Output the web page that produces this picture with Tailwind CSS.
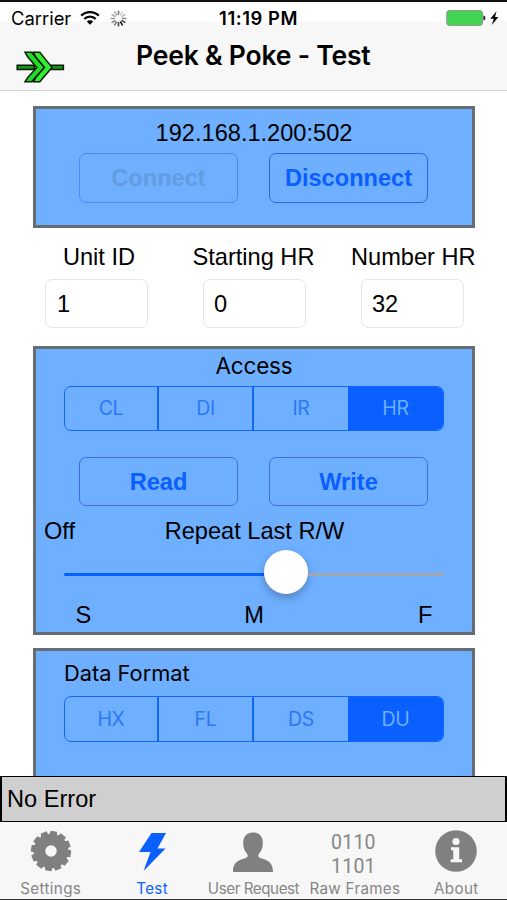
<!DOCTYPE html>
<html lang="en">
<head>
<meta charset="utf-8">
<title>Peek &amp; Poke - Test</title>
<script src="https://cdn.jsdelivr.net/npm/@tailwindcss/browser@4"></script>
</head>
<body class="w-[507px] h-[900px] overflow-hidden bg-white text-black font-['Liberation_Sans',Arial,sans-serif] text-[23.6px] leading-[28px]">
<div class="flex flex-col h-[900px] border-t-2 border-t-[#111] border-b border-b-[#333]">
  <header class="h-[89px] shrink-0 bg-linear-to-b from-white from-[18px] to-[#f7f7f7] to-[21px] border-b border-[#d2d2d4] font-['Inter',sans-serif]">
    <div class="grid grid-cols-[1fr_auto_1fr] h-[32px] items-center pl-[11px] pr-[7px] text-[18.4px] leading-[20px]">
      <div class="flex items-center">
        <span class="w-[61px] whitespace-nowrap">Carrier</span>
        <svg class="ml-[8px]" width="20" height="16" viewBox="0 0 20 16" fill="none" stroke="#000" stroke-width="2.4"><path d="M1.2 5.7a12.5 12.5 0 0 1 17.6 0M4.3 9a8 8 0 0 1 11.4 0"/><path d="M10 14.8 6.8 11.6a4.6 4.6 0 0 1 6.4 0Z" fill="#000" stroke="none"/></svg>
        <svg class="ml-[10px]" width="17" height="17" viewBox="-8.5 -8.5 17 17" stroke-width="1.6" stroke-linecap="round"><path d="M0-4V-7.3" stroke="#777"/><path d="M2.1-3.5 3.8-6.3" stroke="#ccc"/><path d="M3.5-2.1 6.3-3.8" stroke="#bbb"/><path d="M4 0H7.3" stroke="#888"/><path d="M3.5 2.1 6.3 3.8" stroke="#444"/><path d="M2.1 3.5 3.8 6.3" stroke="#111"/><path d="M0 4V7.3" stroke="#444"/><path d="M-2.1 3.5-3.8 6.3" stroke="#777"/><path d="M-3.5 2.1-6.3 3.8" stroke="#888"/><path d="M-4 0H-7.3" stroke="#999"/><path d="M-3.5-2.1-6.3-3.8" stroke="#aaa"/><path d="M-2.1-3.5-3.8-6.3" stroke="#aaa"/></svg>
      </div>
      <div class="font-semibold tracking-[0.55px] ml-[6px]">11:19 PM</div>
      <svg class="justify-self-end" width="54" height="18" viewBox="0 0 54 18"><rect x=".8" y="1.600" width="35.600" height="14.800" rx="2.400" fill="#43d551" stroke="#889689"/><path d="M37.400 6.500c2.600.2 2.600 4.800 0 5Z" fill="#222"/><path d="M50.500 2.200 44.300 9.800h3.500L45.800 16l6.600-8H49Z" fill="#000"/></svg>
    </div>
    <div class="grid grid-cols-[136px_1fr_136px] h-[56px]">
      <svg class="ml-[16px] mt-[16px]" width="49" height="34" viewBox="0 0 49 34" stroke="#071b07" stroke-width="1.5"><path d="M1.200 15.300h17v4.200h-17zM34 15.300h13.400v4.200H34z" fill="#159315"/><path d="M9 2.300h6.500L28.500 17.400 15.500 31.800H9l3-4.600L20.800 17.400 11.800 7Z" fill="#24dc26"/><path d="M17.400 2.300h6.400L36 17.400 23.800 31.800h-6.400L20 27.200l8.500-9.800L19.800 7Z" fill="#2ef02e"/></svg>
      <h1 class="text-[26.5px] leading-[32px] font-semibold whitespace-nowrap mt-[5px] tracking-[-0.2px]">Peek &amp; Poke - Test</h1>
    </div>
  </header>

  <main class="flex-1 min-h-0 overflow-hidden pl-[33px] pr-[32px] pt-[15px]">
    <section class="h-[122px] border-3 border-[#666d72] bg-[#6eafff] flex flex-col items-center pt-[10px]">
      <div>192.168.1.200:502</div>
      <div class="flex gap-[31px] mt-[6px] -ml-px font-bold">
        <button class="w-[159px] h-[50px] rounded-[7px] border border-[#4f86ff] text-[#639cdf]">Connect</button>
        <button class="w-[159px] h-[50px] rounded-[7px] border border-[#3460ee] text-[#0a60ff]">Disconnect</button>
      </div>
    </section>

    <section class="h-[118px] pt-[15px] pl-[12px] grid grid-cols-[103px_103px_103px] gap-x-[55px] content-start justify-items-center">
      <label class="whitespace-nowrap ml-[5px]">Unit ID</label>
      <label class="whitespace-nowrap w-[123px] ml-[-1px]">Starting HR</label>
      <label class="whitespace-nowrap w-[123px]">Number HR</label>
      <div class="w-full h-[49px] mt-[8px] rounded-[7px] border border-[#e6e6e6] pl-[11px] flex items-center">1</div>
      <div class="w-full h-[49px] mt-[8px] rounded-[7px] border border-[#e6e6e6] pl-[10px] flex items-center">0</div>
      <div class="w-full h-[49px] mt-[8px] rounded-[7px] border border-[#e6e6e6] pl-[10px] flex items-center">32</div>
    </section>

    <section class="h-[289px] border-3 border-[#666d72] bg-[#6eafff] flex flex-col items-center pt-[3px]">
      <div class="font-['Inter',sans-serif] text-[22.5px] tracking-[-0.2px]">Access</div>
      <div class="mt-[6px] w-[380px] h-[45px] flex rounded-[7px] border-[1.5px] border-[#1267fb] overflow-hidden text-[#2b78f5] font-['Inter',sans-serif] text-[19.5px] tracking-[-0.3px] text-center leading-[43px]">
        <div class="w-[94px] border-r-2 border-[#1267fb]">CL</div><div class="w-[95px] border-r-2 border-[#1267fb]">DI</div><div class="w-[94px]">IR</div><div class="flex-1 bg-[#0a60ff] text-[#6eafff]">HR</div>
      </div>
      <div class="flex gap-[31px] mt-[26px] -ml-px font-bold text-[#0a60ff]">
        <button class="w-[159px] h-[49px] rounded-[7px] border border-[#3f6aee]">Read</button>
        <button class="w-[159px] h-[49px] rounded-[7px] border border-[#3f6aee]">Write</button>
      </div>
      <div class="mt-[11px] w-full grid grid-cols-[1fr_auto_1fr] pl-[8px] pr-[7px]"><span>Off</span><span>Repeat Last R/W</span></div>
      <div class="mt-[5px] w-[380px] h-[44px] flex items-center">
        <div class="w-[200px] h-[3px] mt-[4px] rounded-l bg-[#0a60ff]"></div>
        <div class="w-[44px] h-[44px] rounded-full bg-white shadow-[0_4px_9px_rgba(0,0,0,0.25)]"></div>
        <div class="flex-1 h-[3px] mt-[4px] rounded-r bg-[#a3a7ad]"></div>
      </div>
      <div class="mt-[7px] w-[357px] grid grid-cols-[1fr_auto_1fr]"><span>S</span><span>M</span><span class="text-right">F</span></div>
    </section>

    <section class="mt-[13px] h-[180px] border-3 border-[#666d72] bg-[#6eafff] px-[28px] pt-[8px]">
      <div class="font-['Inter',sans-serif] text-[21.8px]">Data Format</div>
      <div class="mt-[9px] w-[380px] h-[46px] flex rounded-[7px] border-[1.5px] border-[#1267fb] overflow-hidden text-[#2b78f5] font-['Inter',sans-serif] text-[19.5px] tracking-[-0.3px] text-center leading-[44px]">
        <div class="w-[94px] border-r-2 border-[#1267fb]">HX</div><div class="w-[95px] border-r-2 border-[#1267fb]">FL</div><div class="w-[94px]">DS</div><div class="flex-1 bg-[#0a60ff] text-[#6eafff]">DU</div>
      </div>
    </section>
  </main>

  <div class="h-[46px] shrink-0 bg-[#cfcfcf] border-y-[1.5px] border-l-2 border-r-2 border-black pl-[5px] flex items-center">No Error</div>

  <nav class="h-[77px] shrink-0 bg-[#f7f7f7] grid grid-cols-5 text-[#868686] font-['Inter',sans-serif] text-[15.2px] leading-[18px] text-center">
    <div class="flex flex-col items-center pt-[8px]">
      <svg width="42" height="42" viewBox="-21 -21 42 42"><g fill="#808080" transform="rotate(8)"><path id="t" d="M-3.200-20h6.400l1 6h-8.400zM-3.200 20h6.400l1-6h-8.400z"/><use href="#t" transform="rotate(30)"/><use href="#t" transform="rotate(60)"/><use href="#t" transform="rotate(90)"/><use href="#t" transform="rotate(120)"/><use href="#t" transform="rotate(150)"/></g><circle r="11.500" fill="none" stroke="#808080" stroke-width="11.500"/></svg>
      <span class="mt-[8px] tracking-[0.35px]">Settings</span>
    </div>
    <div class="flex flex-col items-center pt-[8px] text-[#0a60ff]">
      <svg width="28" height="42" viewBox="0 0 28 42" fill="#0a60ff"><path d="M13.500 3H28L19.500 18.500H27.500L5.500 41 12.500 22H1Z"/></svg>
      <span class="mt-[8px] tracking-[0.3px]">Test</span>
    </div>
    <div class="flex flex-col items-center pt-[8px]">
      <svg width="42" height="42" viewBox="0 0 42 42" fill="#808080"><path d="M21 2.500c6.200 0 9.800 3.800 9.800 10.200 0 5-1.400 8.500-4 11.300-.7.8-.6 3 .4 3.600C34 30.300 41 31 41 42H1C1 31 8 30.300 14.800 27.600c1-.6 1.100-2.800.4-3.600-2.600-2.800-4-6.300-4-11.300C11.200 6.300 14.800 2.500 21 2.500Z"/></svg>
      <span class="mt-[8px] whitespace-nowrap tracking-[-0.45px]">User Request</span>
    </div>
    <div class="flex flex-col items-center pt-[8px]">
      <div class="h-[42px] -ml-[3px] pt-px text-[19.5px] leading-[24px] tracking-[0.2px] font-['Roboto',sans-serif]">0110<br>1101</div>
      <span class="mt-[8px] whitespace-nowrap tracking-[0.3px]">Raw Frames</span>
    </div>
    <div class="flex flex-col items-center pt-[8px]">
      <svg width="42" height="42" viewBox="0 0 42 42"><circle cx="21" cy="21" r="20.800" fill="#808080"/><circle cx="21" cy="11.500" r="3.600" fill="#f7f7f7"/><path d="M16 17.200h8.200v12h2.800v3H15.600v-3H18.300v-9H16Z" fill="#f7f7f7"/></svg>
      <span class="mt-[8px] tracking-[0.4px]">About</span>
    </div>
  </nav>
</div>
</body>
</html>
